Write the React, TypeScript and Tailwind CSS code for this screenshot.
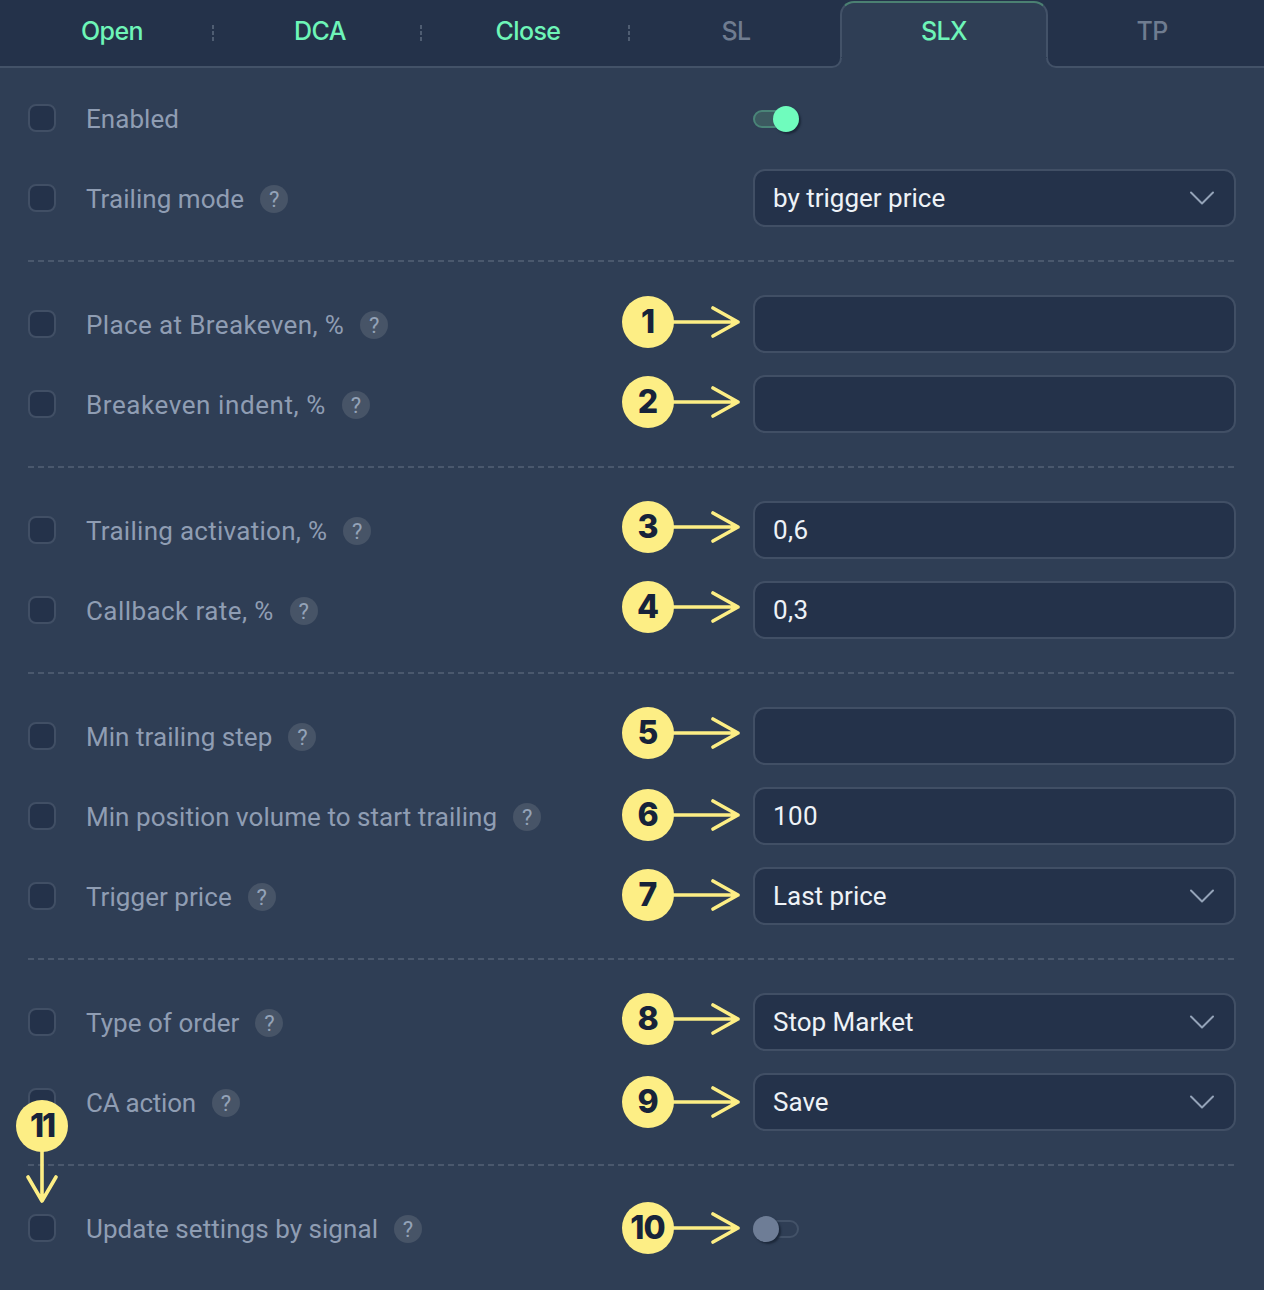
import { ChevronDown } from 'lucide-react';

const tabs = [
  { name: 'Open', color: 'text-[#6ef5b8]', sep: true },
  { name: 'DCA', color: 'text-[#6ef5b8]', sep: true },
  { name: 'Close', color: 'text-[#6ef5b8]', sep: true },
  { name: 'SL', color: 'text-[#6f7c90]', sep: false },
  { name: 'SLX', color: 'text-[#6ef5b8]', sep: false, active: true },
  { name: 'TP', color: 'text-[#6f7c90]', sep: false },
];

function TabCorner({ className }: { className: string }) {
  return (
    <svg width="12" height="12" viewBox="0 0 12 12" fill="none" className={`absolute -bottom-[1px] ${className}`}>
      <path d="M0 10A9 9 0 0 0 9 1V0H12V12H0Z" fill="#2f3e55" />
      <path d="M0 10A9 9 0 0 0 9 1" stroke="#435268" strokeWidth="2" />
    </svg>
  );
}

function Tabs() {
  return (
    <div className="relative flex h-[68px] border-b-2 border-[#435268] bg-[#24324a] px-2">
      {tabs.map((t) => (
        <div
          key={t.name}
          className={
            t.active
              ? 'relative z-10 -mb-[2px] mt-[1px] flex h-[67px] w-[208px] items-center justify-center rounded-t-[14px] border-2 border-b-0 border-[#435268] border-t-[#4b8072] bg-[#2f3e55] pb-[8px]'
              : 'relative flex h-[66px] w-[208px] items-center justify-center pb-[2px]'
          }
        >
          <span className={`font-['Inter',sans-serif] text-[25px] font-medium tracking-[-0.6px] ${t.color}`}>{t.name}</span>
          {t.sep && (
            <span className="absolute right-[2px] top-[25px] h-[16px] w-[2px] bg-[repeating-linear-gradient(180deg,#4f5d72_0,#4f5d72_4px,transparent_4px,transparent_6px)]" />
          )}
          {t.active && (
            <>
              <TabCorner className="-left-[10px]" />
              <TabCorner className="-right-[10px] -scale-x-100" />
            </>
          )}
        </div>
      ))}
    </div>
  );
}

function Divider() {
  return (
    <div className="mb-[33px] mt-[33px] h-[2px] bg-[repeating-linear-gradient(90deg,#4a586d_0,#4a586d_6px,transparent_6px,transparent_10px)]" />
  );
}

function Help() {
  return (
    <span className="ml-[16px] flex h-[28px] w-[28px] shrink-0 items-center justify-center rounded-full bg-[#475467] text-[22px] text-[#94a3b8]">?</span>
  );
}

function Checkbox() {
  return <span className="h-[28px] w-[28px] shrink-0 rounded-[8px] border-2 border-[#414f65] bg-[#24324a]" />;
}

function Row({
  label,
  help = true,
  tracking = 'tracking-[0.05px]',
  children,
}: {
  label: string;
  help?: boolean;
  tracking?: string;
  children?: React.ReactNode;
}) {
  return (
    <div className="flex h-[58px] items-center">
      <div className="flex w-[725px] items-center">
        <Checkbox />
        <div className="flex items-center pt-[2px]">
          <span className={`ml-[30px] text-[26px] leading-none text-[#8f9db3] ${tracking}`}>{label}</span>
          {help && <Help />}
        </div>
      </div>
      <div className="relative w-[483px]">{children}</div>
    </div>
  );
}

function Input({ value }: { value?: string }) {
  return (
    <div className="flex h-[58px] items-center rounded-[12px] border-2 border-[#414f65] bg-[#24324a] px-[18px] text-[26px] tracking-[0.4px] text-[#eef2f7]">
      {value}
    </div>
  );
}

function Select({ value }: { value: string }) {
  return (
    <div className="flex h-[58px] items-center justify-between rounded-[12px] border-2 border-[#414f65] bg-[#24324a] pl-[18px] pr-[10px] text-[26px] text-[#eef2f7]">
      {value}
      <ChevronDown className="h-[44px] w-[44px] text-[#94a3b8]" strokeWidth={1.1} />
    </div>
  );
}

function Toggle({ on }: { on?: boolean }) {
  return on ? (
    <div className="relative h-[18px] w-[46px]">
      <div className="h-[18px] w-[36px] rounded-full border-2 border-[#4a8578] bg-[#3c5a60]" />
      <div className="absolute -top-[4px] left-[20px] h-[26px] w-[26px] rounded-full bg-[#6ffcbd] shadow-[2px_2px_2px_#1c283a]" />
    </div>
  ) : (
    <div className="relative h-[18px] w-[46px]">
      <div className="h-[18px] w-[46px] rounded-full border-2 border-[#435268]" />
      <div className="absolute -top-[4px] left-0 h-[26px] w-[26px] rounded-full bg-[#6e7d96] shadow-[2px_2px_2px_#1c283a]" />
    </div>
  );
}

function Marker({ n, className }: { n: number; className: string }) {
  return (
    <div className={`absolute left-[-131px] flex h-[52px] items-center ${className}`}>
      <span className="relative z-10 flex h-[52px] w-[52px] items-center justify-center rounded-full bg-[#fdee85] pr-[1px] font-['Inter',sans-serif] text-[32px] font-extrabold tracking-[-1px] text-[#17233a]">
        {n}
      </span>
      <svg width="68" height="32" viewBox="0 0 68 32" fill="none" className="-ml-[1px]">
        <path d="M0 16H65M40 2l25 14-25 14" stroke="#fdee85" strokeWidth="3.6" strokeLinecap="round" strokeLinejoin="round" />
      </svg>
    </div>
  );
}

export default function App() {
  return (
    <div className="h-[1290px] w-[1264px] overflow-hidden bg-[#2f3e55] font-['Roboto',sans-serif]">
      <Tabs />
      <div className="px-[28px] pt-[21px]">
        <div className="flex flex-col gap-[22px]">
          <Row label="Enabled" help={false}>
            <div className="flex h-[58px] items-center pt-[2px]"><Toggle on /></div>
          </Row>
          <Row label="Trailing mode"><Select value="by trigger price" /></Row>
        </div>
        <Divider />
        <div className="flex flex-col gap-[22px]">
          <Row label="Place at Breakeven, %" tracking="tracking-[0.38px]"><Marker n={1} className="top-[1px]" /><Input /></Row>
          <Row label="Breakeven indent, %" tracking="tracking-[0.58px]"><Marker n={2} className="top-[1px]" /><Input /></Row>
        </div>
        <Divider />
        <div className="flex flex-col gap-[22px]">
          <Row label="Trailing activation, %" tracking="tracking-[0.28px]"><Marker n={3} className="top-0" /><Input value="0,6" /></Row>
          <Row label="Callback rate, %" tracking="tracking-[0.42px]"><Marker n={4} className="top-0" /><Input value="0,3" /></Row>
        </div>
        <Divider />
        <div className="flex flex-col gap-[22px]">
          <Row label="Min trailing step"><Marker n={5} className="top-0" /><Input /></Row>
          <Row label="Min position volume to start trailing"><Marker n={6} className="top-[2px]" /><Input value="100" /></Row>
          <Row label="Trigger price"><Marker n={7} className="top-[2px]" /><Select value="Last price" /></Row>
        </div>
        <Divider />
        <div className="flex flex-col gap-[22px]">
          <Row label="Type of order"><Marker n={8} className="top-0" /><Select value="Stop Market" /></Row>
          <Row label="CA action" tracking="tracking-[-0.25px]"><Marker n={9} className="top-[3px]" /><Select value="Save" /></Row>
        </div>
        <Divider />
        <div className="relative">
          <Row label="Update settings by signal">
            <Marker n={10} className="top-[3px]" />
            <div className="flex h-[58px] items-center pt-[2px]"><Toggle /></div>
          </Row>
          {/* 11 points down at the checkbox */}
          <div className="absolute -left-[12px] -top-[99px] flex w-[52px] flex-col items-center">
            <span className="relative z-10 flex h-[52px] w-[52px] items-center justify-center rounded-full bg-[#fdee85] font-['Inter',sans-serif] text-[32px] font-extrabold tracking-[-2px] text-[#17233a]">11</span>
            <svg width="32" height="52" viewBox="0 0 32 52" fill="none" className="-mt-[1px]">
              <path d="M16 0V50M2 26l14 24 14-24" stroke="#fdee85" strokeWidth="3.6" strokeLinecap="round" strokeLinejoin="round" />
            </svg>
          </div>
        </div>
      </div>
    </div>
  );
}
